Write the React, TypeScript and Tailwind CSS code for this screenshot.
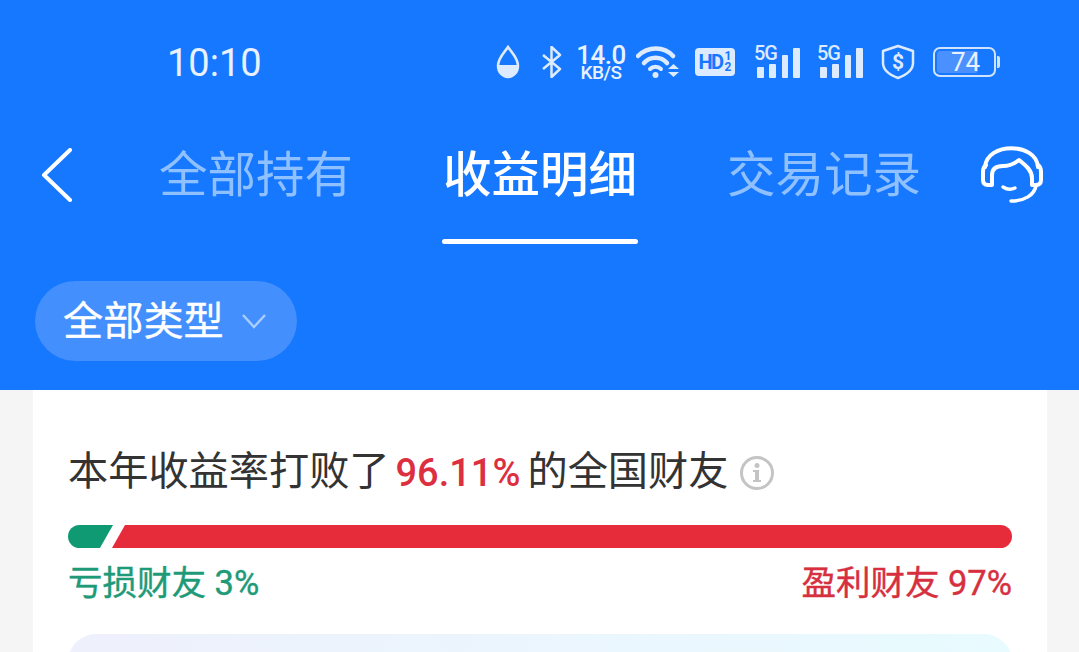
const FONT = "font-['Roboto','Noto_Sans_CJK_SC',sans-serif]";

function SignalIcon() {
  return (
    <div className="relative w-[46px] h-[32px]">
      <span className="absolute left-0 top-[-3px] text-[20px] leading-[20px] font-medium text-[#dcebff] tracking-[-1px]">5G</span>
      <svg width="46" height="32" viewBox="0 0 46 32" className="absolute left-0 top-0">
        <rect x="3" y="21" width="7" height="11" rx="1" fill="#dcebff" />
        <rect x="15" y="18" width="7" height="14" rx="1" fill="#dcebff" />
        <rect x="28" y="9" width="6" height="23" rx="1" fill="#dcebff" />
        <rect x="39" y="2" width="7" height="30" rx="1" fill="#dcebff" />
      </svg>
    </div>
  );
}

function StatusBar() {
  return (
    <div className="h-[124px] flex items-center pl-[167px]">
      <span className="text-[38px] leading-none text-[#e8f2ff] w-[329px] pt-[2px]">10:10</span>
      <svg width="24" height="34" viewBox="0 0 24 34">
        <path d="M12 2 C8 8 2 13 2 21 A10 11 0 0 0 22 21 C22 13 16 8 12 2 Z" fill="none" stroke="#dcebff" strokeWidth="2.500" />
        <path d="M2 20 H22 C22 27 18 32 12 32 C6 32 2 27 2 20 Z" fill="#dcebff" />
      </svg>
      <svg width="22" height="32" viewBox="0 0 22 32" className="ml-[21px]">
        <path d="M2 9 L19 23 L10.500 31 V1 L19 9 L2 23" fill="none" stroke="#dcebff" strokeWidth="2.500" strokeLinejoin="round" />
      </svg>
      <div className="ml-[15px] w-[46px] flex flex-col items-center text-[#e8f2ff]">
        <span className="text-[26px] leading-[22px] font-medium tracking-[-0.500px]">14.0</span>
        <span className="text-[19px] leading-[14px] font-medium tracking-[-0.500px] whitespace-nowrap">KB/S</span>
      </div>
      <svg width="44" height="33" viewBox="0 0 44 33" className="ml-[12px]">
        <path d="M2 10 C12 0 28 0 37 10" fill="none" stroke="#dcebff" strokeWidth="4.500" strokeLinecap="round" />
        <path d="M8 17 C14 10 25 10 31 17" fill="none" stroke="#dcebff" strokeWidth="4.500" strokeLinecap="round" />
        <path d="M14 23 C17 20 22 20 25 23" fill="none" stroke="#dcebff" strokeWidth="4" strokeLinecap="round" />
        <circle cx="19.500" cy="29" r="3" fill="#dcebff" />
        <path d="M32 23 L37.500 18 L43 23 Z M32 26 H43 L37.500 31 Z" fill="#dcebff" />
      </svg>
      <div className="ml-[15px] w-[40px] h-[28px] rounded-[4px] bg-[#dcebff] flex items-center justify-center gap-[2px] text-[#1677ff] font-bold">
        <span className="text-[20px] leading-none tracking-[-1.500px]">HD</span>
        <span className="flex flex-col text-[12px] leading-[11px]">
          <span>1</span>
          <span>2</span>
        </span>
      </div>
      <div className="ml-[19px]">
        <SignalIcon />
      </div>
      <div className="ml-[17px]">
        <SignalIcon />
      </div>
      <div className="relative ml-[18px] w-[34px] h-[36px]">
        <svg width="34" height="36" viewBox="0 0 34 36">
          <path d="M17 2 L32 7 V19 C32 26 25 31 17 34 C9 31 2 26 2 19 V7 Z" fill="none" stroke="#dcebff" strokeWidth="2.500" strokeLinejoin="round" />
        </svg>
        <span className="absolute inset-0 flex items-center justify-center text-[21px] leading-none font-bold text-[#dcebff]">$</span>
      </div>
      <div className="ml-[18px] flex items-center">
        <div className="w-[63px] h-[30px] rounded-[7px] border-[2.500px] border-[#cfe3ff] p-[2px]">
          <div className="relative h-full w-[74%] rounded-[3px] bg-[#4a90ff]">
            <span className="absolute left-[14px] top-0 h-full flex items-center text-[26px] leading-none text-[#e8f2ff]">74</span>
          </div>
        </div>
        <div className="ml-[1px] w-[3px] h-[12px] rounded-r-[2px] bg-[#cfe3ff]" />
      </div>
    </div>
  );
}

function Tab({ label, active }: { label: string; active?: boolean }) {
  return (
    <div className="w-[196px] flex flex-col items-center">
      <div className={`h-[102px] pt-[3px] flex items-center text-[48.500px] leading-none whitespace-nowrap ${active ? "text-white font-medium" : "text-[#8fc0ff]"}`}>
        {label}
      </div>
      <div className={`mt-[13px] h-[5px] w-full rounded-full ${active ? "bg-white" : "bg-transparent"}`} />
    </div>
  );
}

function TabRow() {
  return (
    <div className="h-[120px] flex items-start">
      <svg width="34" height="54" viewBox="0 0 34 54" className="ml-[40px] mt-[24px]">
        <path d="M30 2 L4 27 L30 52" fill="none" stroke="#ffffff" strokeWidth="4" strokeLinecap="round" strokeLinejoin="round" />
      </svg>
      <div className="ml-[84px] flex gap-[88px]">
        <Tab label="全部持有" />
        <Tab label="收益明细" active />
        <Tab label="交易记录" />
      </div>
      <svg width="64" height="60" viewBox="980 146 64 60" className="ml-[58px] mt-[22px]">
        <path d="M985 167 C987 142 1036 142 1038 167" fill="none" stroke="#fff" strokeWidth="4" strokeLinecap="round" />
        <path d="M986 165 Q983 167 983 172 V180 Q983 185 988 185 H992 V175 C992 168 997 166 1003 166 C1010 166 1014 164 1019 160 C1025 165 1032 170 1032 178 V185 H1036 Q1041 185 1041 180 V172 Q1041 167 1038 165" fill="none" stroke="#fff" strokeWidth="4" strokeLinejoin="round" strokeLinecap="round" />
        <path d="M1003 187 Q1009 191 1015 188" fill="none" stroke="#fff" strokeWidth="3.500" strokeLinecap="round" />
        <path d="M1036 186 C1034 195 1025 201 1011 201" fill="none" stroke="#fff" strokeWidth="3.500" strokeLinecap="round" />
      </svg>
    </div>
  );
}

function Header() {
  return (
    <div className="bg-[#1677ff] h-[390px]">
      <StatusBar />
      <TabRow />
      <div className="mt-[37px] ml-[35px] w-[262px] h-[80px] rounded-full bg-[#438ffd] flex items-center pl-[28px]">
        <span className="text-[40.200px] leading-none text-white pt-[3px] [-webkit-text-stroke:0.3px_#ffffff]">全部类型</span>
        <svg width="24" height="16" viewBox="0 0 24 16" className="ml-[18px]">
          <path d="M1 2 L12 14 L23 2" fill="none" stroke="#a9cdff" strokeWidth="2.500" />
        </svg>
      </div>
    </div>
  );
}

function Card() {
  return (
    <div className="ml-[33px] w-[1014px] bg-white h-[262px] px-[35px] pt-[56px]">
      <div className="flex items-center h-[50px] text-[38px] leading-none text-[#333333] whitespace-nowrap pt-[3px]">
        <span className="text-[40.200px]">本年收益率打败了</span>
        <span className="ml-[6px] text-[#dc2f3f] font-medium">96.11%</span>
        <span className="ml-[7px] text-[40.200px]">的全国财友</span>
        <svg width="36" height="36" viewBox="0 0 36 36" className="ml-[11px]">
          <circle cx="18" cy="18" r="15.500" fill="none" stroke="#c4c4c4" strokeWidth="3" />
          <circle cx="18" cy="10.500" r="2.500" fill="#c4c4c4" />
          <path d="M14 15 H20 V25 H22 V27 H14 V25 H16 V17 H14 Z" fill="#c4c4c4" />
        </svg>
      </div>
      <div className="mt-[29px] h-[23px] flex rounded-full overflow-hidden">
        <div className="w-[45px] bg-[#0f9a73] [clip-path:polygon(0_0,100%_0,71%_100%,0_100%)]" />
        <div className="flex-1 ml-[-1px] bg-[#e62c3b] [clip-path:polygon(13px_0,100%_0,100%_100%,0_100%)]" />
      </div>
      <div className="mt-[13px] flex justify-between text-[34.500px] leading-[44px] whitespace-nowrap">
        <span className="text-[#1f9a78] [-webkit-text-stroke:0.4px_#1f9a78]">亏损财友 3%</span>
        <span className="text-[#d6303f] [-webkit-text-stroke:0.4px_#d6303f]">盈利财友 97%</span>
      </div>
      <div className="mt-[29px] h-[60px] rounded-[28px] bg-gradient-to-r from-[#eef0fc] to-[#e8fbff]" />
    </div>
  );
}

export default function App() {
  return (
    <div className={`${FONT} w-[1079px] h-[652px] overflow-hidden bg-[#f5f5f5]`}>
      <Header />
      <Card />
    </div>
  );
}
